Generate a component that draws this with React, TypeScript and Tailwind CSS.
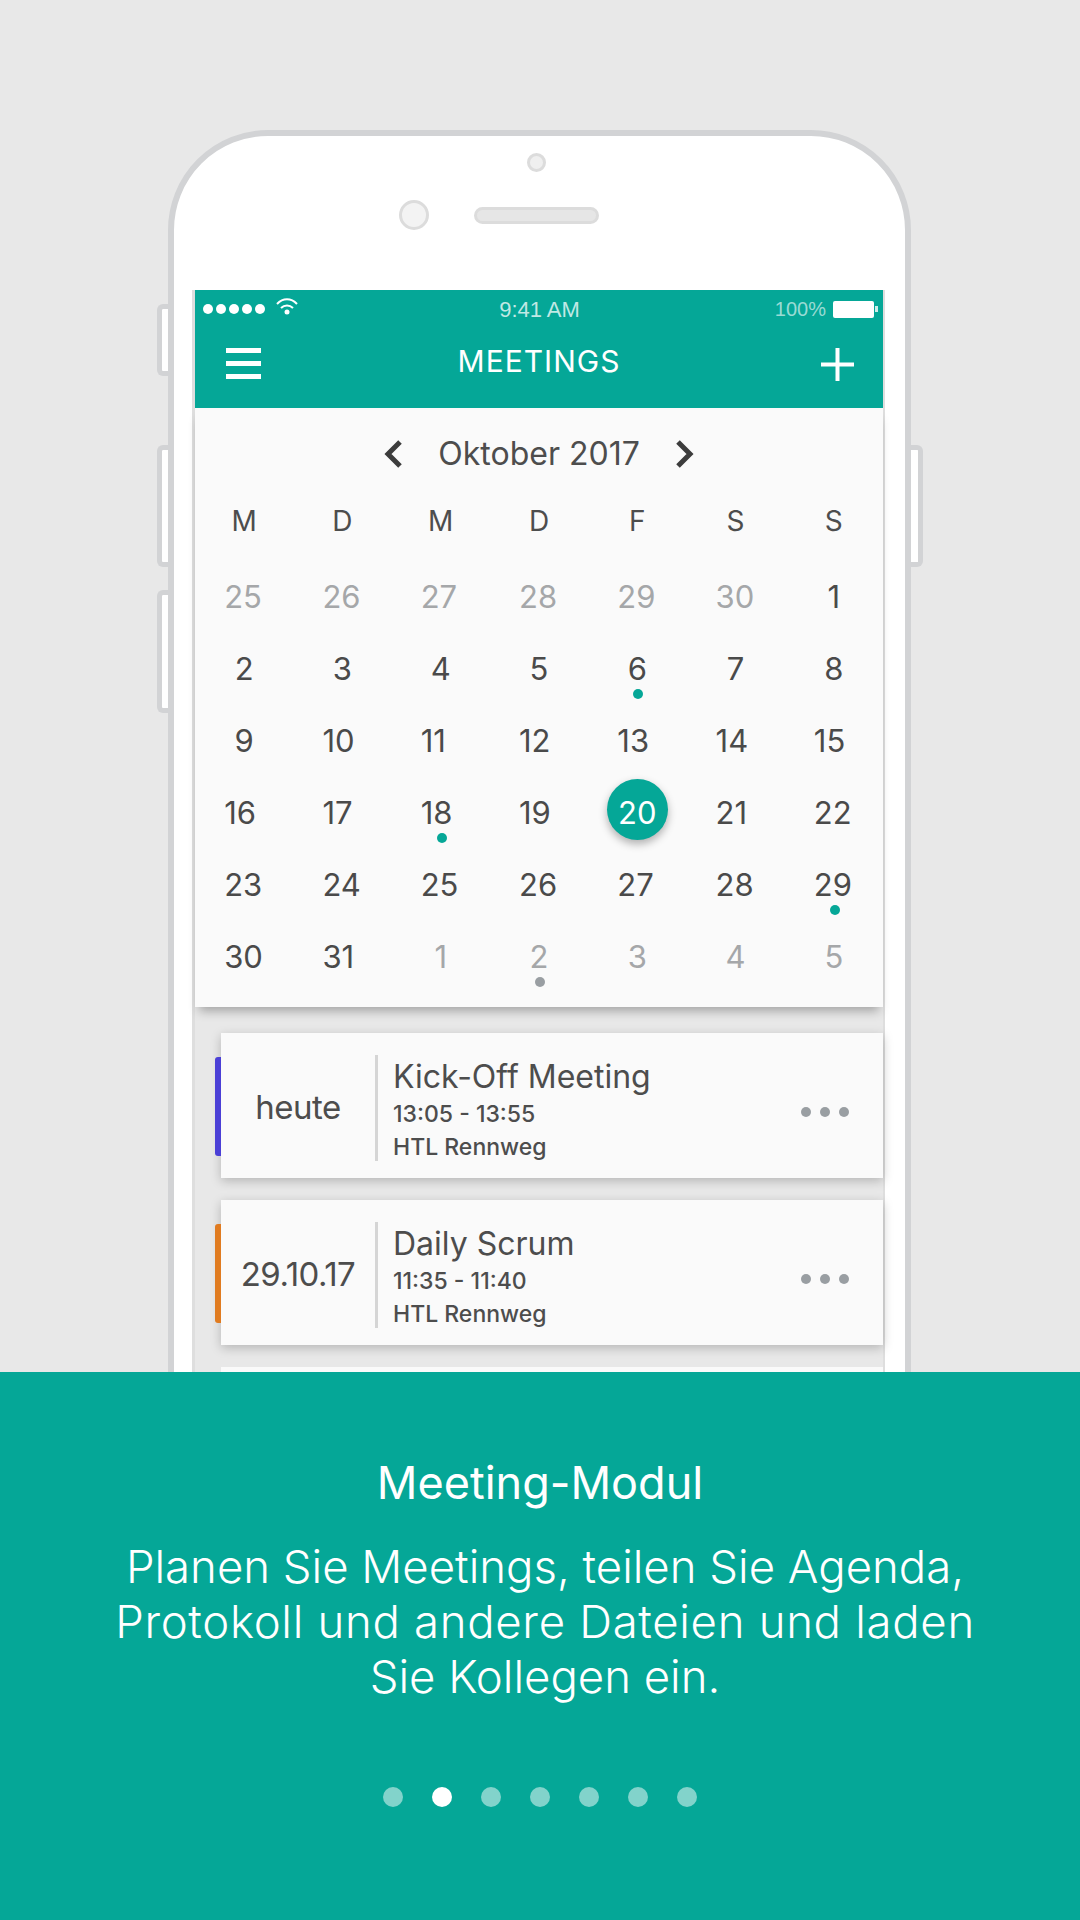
const days: { n: string; muted?: boolean; dot?: string; sel?: boolean }[] = [
  ...["25","26","27","28","29","30"].map((n) => ({ n, muted: true })),
  { n: "1" }, { n: "2" }, { n: "3" }, { n: "4" }, { n: "5" },
  { n: "6", dot: "teal" }, { n: "7" }, { n: "8" }, { n: "9" },
  ...["10","11","12","13","14","15","16","17"].map((n) => ({ n })),
  { n: "18", dot: "teal" }, { n: "19" }, { n: "20", sel: true }, { n: "21" }, { n: "22" },
  ...["23","24","25","26","27","28"].map((n) => ({ n })),
  { n: "29", dot: "teal" }, { n: "30" }, { n: "31" },
  { n: "1", muted: true }, { n: "2", muted: true, dot: "gray" },
  { n: "3", muted: true }, { n: "4", muted: true }, { n: "5", muted: true },
];

function Cell({ d }: { d: (typeof days)[number] }) {
  return (
    <div className="relative flex h-[72px] items-center justify-center">
      {d.sel && (
        <div className="absolute left-[19px] top-[3px] h-[61px] w-[61px] rounded-full bg-[#05a797] shadow-[0_4px_8px_rgba(0,0,0,0.3)]" />
      )}
      <span
        className={`relative w-[40px] ${d.n.length === 1 || d.sel ? "text-center" : "text-left"} text-[31px] leading-none ${
          d.sel ? "text-white" : d.muted ? "text-[#a5a7a9]" : "text-[#4a4a4a]"
        }`}
      >
        {d.n}
      </span>
      {d.dot && (
        <div
          className={`absolute bottom-[5px] left-[45px] h-[10px] w-[10px] rounded-full ${
            d.dot === "teal" ? "bg-[#05a797]" : "bg-[#999ea2]"
          }`}
        />
      )}
    </div>
  );
}

function Card({ date, title, time, accent }: { date: string; title: string; time: string; accent: string }) {
  return (
    <div className="relative ml-[26px] flex h-[145px] items-center bg-[#fafafa] pt-[4px] shadow-[0_3px_10px_rgba(0,0,0,0.22)]">
      <div className={`absolute -left-[6px] top-[24px] h-[99px] w-[6px] rounded-l-[3px] ${accent}`} />
      <div className="w-[154px] text-center text-[33px] tracking-[-0.5px] text-[#4d4d4d]">{date}</div>
      <div className="h-[106px] w-[3px] bg-[#d5d5d5]" />
      <div className="ml-[15px] flex flex-1 flex-col pt-[8px]">
        <div className="text-[32px] leading-[36px] text-[#4d4d4d]">{title}</div>
        <div className="mt-[3px] text-[23px] font-medium leading-[32px] text-[#4d4d4d]">{time}</div>
        <div className="text-[23px] font-medium leading-[34px] text-[#4d4d4d]">HTL Rennweg</div>
      </div>
      <div className="mr-[34px] mt-[8px] flex gap-[9px]">
        <div className="h-[10px] w-[10px] rounded-full bg-[#999ea2]" />
        <div className="h-[10px] w-[10px] rounded-full bg-[#999ea2]" />
        <div className="h-[10px] w-[10px] rounded-full bg-[#999ea2]" />
      </div>
    </div>
  );
}

export default function App() {
  return (
    <div className="flex h-[1920px] w-[1080px] flex-col overflow-hidden bg-[#e8e8e8] font-['Inter',sans-serif]">
      <div className="relative h-[1372px] overflow-hidden pl-[168px] pt-[130px]">
        <div className="absolute left-[157px] top-[304px] h-[72px] w-[12px] rounded-l-[6px] border-[5px] border-r-0 border-[#d2d3d5] bg-white" />
        <div className="absolute left-[157px] top-[445px] h-[122px] w-[12px] rounded-l-[6px] border-[5px] border-r-0 border-[#d2d3d5] bg-white" />
        <div className="absolute left-[157px] top-[590px] h-[123px] w-[12px] rounded-l-[6px] border-[5px] border-r-0 border-[#d2d3d5] bg-white" />
        <div className="absolute left-[910px] top-[445px] h-[122px] w-[13px] rounded-r-[6px] border-[5px] border-l-0 border-[#d2d3d5] bg-white" />

        <div className="relative h-[1400px] w-[743px] rounded-t-[100px] border-[6px] border-[#d2d3d5] bg-white pl-[18px] pt-[154px]">
          <div className="relative">
            <div className="absolute left-[335px] top-[-137px] h-[19px] w-[19px] rounded-full border-[3px] border-[#dcdcdc] bg-[#efefef]" />
            <div className="absolute left-[207px] top-[-90px] h-[30px] w-[30px] rounded-full border-[3px] border-[#dcdcdc] bg-[#f3f3f3]" />
            <div className="absolute left-[282px] top-[-83px] h-[17px] w-[125px] rounded-full border-[3px] border-[#dcdcdc] bg-[#e6e6e6]" />
          </div>

          <div className="h-[1100px] w-[693px] border-l-[3px] border-r-2 border-[#dedede] bg-[#e8e8e8]">
            <div className="h-[118px] bg-[#05a797] text-white">
              <div className="grid h-[38px] grid-cols-3 items-center pl-[8px] pr-[5px]">
                <div className="flex items-center">
                  <div className="flex gap-[3px]">
                    {[0, 1, 2, 3, 4].map((i) => (
                      <div key={i} className="h-[10px] w-[10px] rounded-full bg-white" />
                    ))}
                  </div>
                  <svg className="ml-[11px] mt-[-5px]" width="22" height="17" viewBox="0 0 22 17" fill="none" stroke="white">
                    <path d="M1 6C7-.3 15-.3 21 6" strokeWidth="2" />
                    <path d="M5 10c3.500-3.500 8.500-3.500 12 0" strokeWidth="2" />
                    <circle cx="11" cy="14" r="2.500" fill="white" stroke="none" />
                  </svg>
                </div>
                <div className="whitespace-nowrap pr-[2px] text-center font-['Liberation_Sans',sans-serif] text-[22px] text-white/75">9:41 AM</div>
                <div className="flex items-center justify-end">
                  <div className="whitespace-nowrap font-['Liberation_Sans',sans-serif] text-[20px] text-white/60">100%</div>
                  <div className="ml-[7px] h-[17px] w-[41px] rounded-[2px] bg-white" />
                  <div className="ml-[1px] h-[6px] w-[3px] bg-white/80" />
                </div>
              </div>
              <div className="relative flex h-[80px] items-start justify-center pt-[15px]">
                <div className="absolute left-[31px] top-[20px] flex h-[31px] w-[35px] flex-col justify-between">
                  <div className="h-[5px] bg-white" />
                  <div className="h-[5px] bg-white" />
                  <div className="h-[5px] bg-white" />
                </div>
                <div className="text-[30px] leading-[36px] tracking-[1px]">MEETINGS</div>
                <svg className="absolute right-[29px] top-[20px]" width="33" height="33" viewBox="0 0 33 33" fill="none" stroke="white" strokeWidth="4">
                  <path d="M0 16.500H33M16.500 0V33" />
                </svg>
              </div>
            </div>

            <div className="h-[599px] bg-[#fafafa] shadow-[0_8px_10px_-4px_rgba(0,0,0,0.3)]">
              <div className="flex h-[89px] items-center justify-center pt-[2px]">
                <svg width="20" height="30" viewBox="0 0 20 30" fill="none" stroke="#3c3c3c" strokeWidth="5" className="mr-[35px]">
                  <path d="M17 3 5 15l12 12" />
                </svg>
                <div className="text-[32px] text-[#4d4d4d]">Oktober 2017</div>
                <svg width="20" height="30" viewBox="0 0 20 30" fill="none" stroke="#3c3c3c" strokeWidth="5" className="ml-[35px]">
                  <path d="m3 3 12 12L3 27" />
                </svg>
              </div>
              <div className="mb-[15px] grid h-[48px] grid-cols-7 items-center text-center text-[28px] text-[#4d4d4d]">
                {["M", "D", "M", "D", "F", "S", "S"].map((x, i) => (
                  <div key={i}>{x}</div>
                ))}
              </div>
              <div className="grid grid-cols-7">
                {days.map((d, i) => (
                  <Cell key={i} d={d} />
                ))}
              </div>
            </div>

            <div className="mt-[26px] flex flex-col gap-[22px]">
              <Card date="heute" title="Kick-Off Meeting" time="13:05 - 13:55" accent="bg-[#4a3fd6]" />
              <Card date="29.10.17" title="Daily Scrum" time="11:35 - 11:40" accent="bg-[#e07b20]" />
              <div className="ml-[26px] h-[145px] bg-[#fafafa]" />
            </div>
          </div>
        </div>
      </div>

      <div className="flex flex-1 flex-col items-center bg-[#05a797] pt-[86px] text-white">
        <div className="text-[45px] leading-[50px]">Meeting-Modul</div>
        <div className="mt-[31px] w-[900px] pl-[10px] text-center text-[45.5px] font-light leading-[55px]">
          <div>Planen Sie Meetings, teilen Sie Agenda,</div>
          <div className="tracking-[0.7px]">Protokoll und andere Dateien und laden</div>
          <div>Sie Kollegen ein.</div>
        </div>
        <div className="mt-[83px] flex gap-[29px]">
          {[0, 1, 2, 3, 4, 5, 6].map((i) => (
            <div key={i} className={`h-[20px] w-[20px] rounded-full ${i === 1 ? "bg-white" : "bg-[#82d3cb]"}`} />
          ))}
        </div>
      </div>
    </div>
  );
}
